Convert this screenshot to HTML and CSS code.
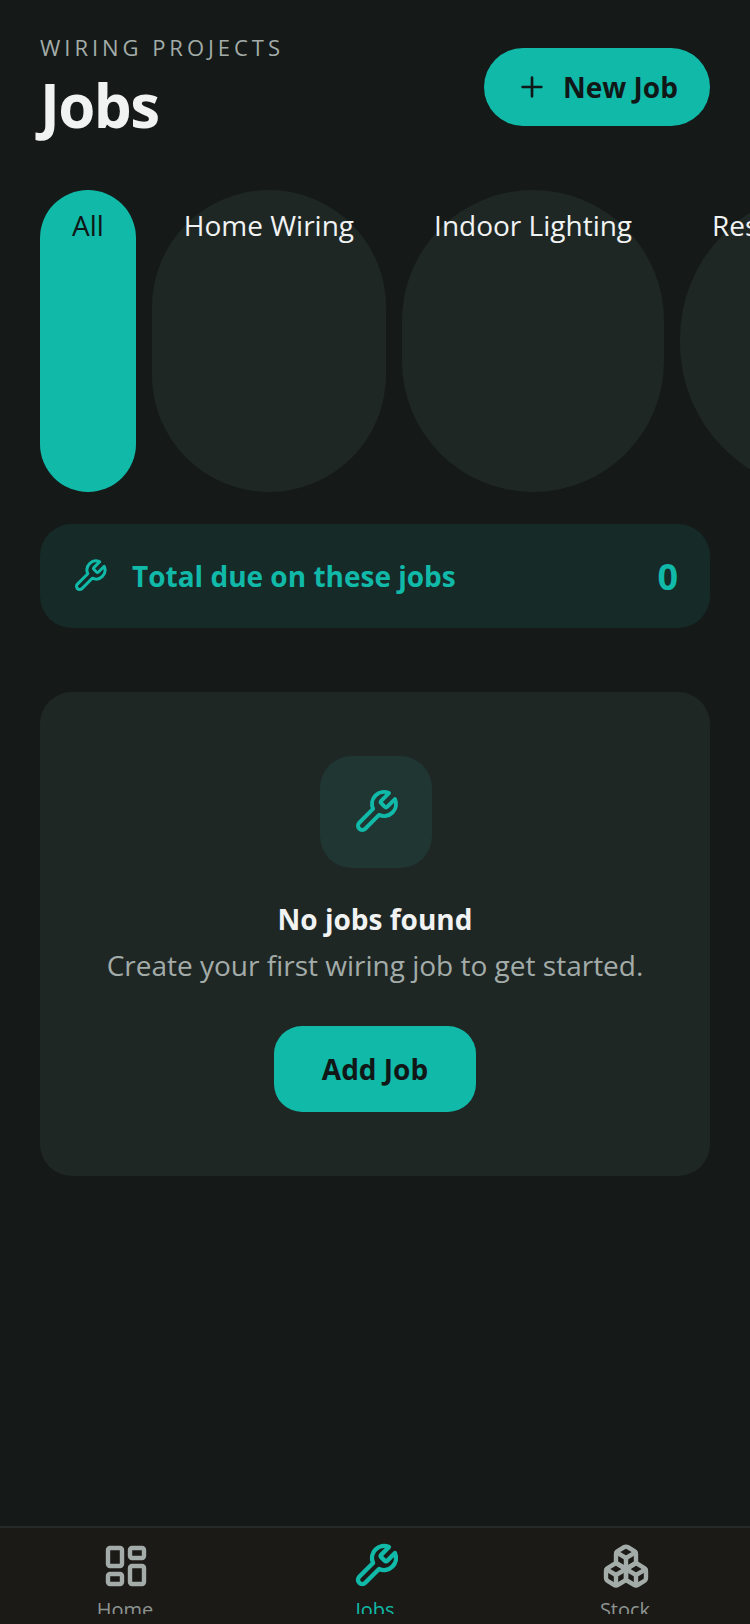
FILE: index.html
```html
<!DOCTYPE html>
<html lang="en">
<head>
<meta charset="utf-8">
<title>Jobs</title>
<link rel="stylesheet" href="styles.css">
</head>
<body>
<div class="app">
  <main class="main">
    <header class="header">
      <div class="titles">
        <div class="eyebrow">WIRING PROJECTS</div>
        <h1 class="title">Jobs</h1>
      </div>
      <button class="new-btn">
        <svg class="plus" viewBox="0 0 24 24"><path d="M5 12h14M12 5v14"/></svg>
        <span class="new-label">New Job</span>
      </button>
    </header>
    <div class="chips">
      <div class="chip chip-active">All</div>
      <div class="chip">Home Wiring</div>
      <div class="chip">Indoor Lighting</div>
      <div class="chip">Residential Wiring</div>
    </div>
    <section class="total">
      <svg class="ico total-ico" viewBox="0 0 24 24"><path d="M14.7 6.3a1 1 0 0 0 0 1.4l1.6 1.6a1 1 0 0 0 1.4 0l3.77-3.77a6 6 0 0 1-7.94 7.94l-6.91 6.91a2.12 2.12 0 0 1-3-3l6.91-6.91a6 6 0 0 1 7.94-7.94l-3.76 3.76z"/></svg>
      <span class="total-label">Total due on these jobs</span>
      <span class="total-value">0</span>
    </section>
    <section class="empty">
      <div class="empty-tile">
        <svg class="ico empty-ico" viewBox="0 0 24 24"><path d="M14.7 6.3a1 1 0 0 0 0 1.4l1.6 1.6a1 1 0 0 0 1.4 0l3.77-3.77a6 6 0 0 1-7.94 7.94l-6.91 6.91a2.12 2.12 0 0 1-3-3l6.91-6.91a6 6 0 0 1 7.94-7.94l-3.76 3.76z"/></svg>
      </div>
      <div class="empty-title">No jobs found</div>
      <div class="empty-text">Create your first wiring job to get started.</div>
      <button class="add-btn">Add Job</button>
    </section>
  </main>
  <nav class="nav">
    <div class="nav-item">
      <svg class="ico nav-ico" viewBox="0 0 24 24"><rect x="3" y="3" width="7" height="9" rx="1"/><rect x="14" y="3" width="7" height="5" rx="1"/><rect x="14" y="12" width="7" height="9" rx="1"/><rect x="3" y="16" width="7" height="5" rx="1"/></svg>
      <span class="nav-label">Home</span>
    </div>
    <div class="nav-item nav-active">
      <svg class="ico nav-ico" viewBox="0 0 24 24"><path d="M14.7 6.3a1 1 0 0 0 0 1.4l1.6 1.6a1 1 0 0 0 1.4 0l3.77-3.77a6 6 0 0 1-7.94 7.94l-6.91 6.91a2.12 2.12 0 0 1-3-3l6.91-6.91a6 6 0 0 1 7.94-7.94l-3.76 3.76z"/></svg>
      <span class="nav-label">Jobs</span>
    </div>
    <div class="nav-item">
      <svg class="ico nav-ico" viewBox="0 0 24 24"><path d="M2.97 12.92A2 2 0 0 0 2 14.63v3.24a2 2 0 0 0 .97 1.71l3 1.8a2 2 0 0 0 2.06 0L12 19v-5.5l-5-3-4.03 2.42Z"/><path d="m7 16.5-4.74-2.85"/><path d="m7 16.5 5-3"/><path d="M7 16.5v5.17"/><path d="M12 13.5V19l3.97 2.38a2 2 0 0 0 2.06 0l3-1.8a2 2 0 0 0 .97-1.71v-3.24a2 2 0 0 0-.97-1.71L17 10.5l-5 3Z"/><path d="m17 16.5-5-3"/><path d="m17 16.5 4.74-2.85"/><path d="M17 16.5v5.17"/><path d="M7.97 4.42A2 2 0 0 0 7 6.13v4.37l5 3 5-3V6.13a2 2 0 0 0-.97-1.71l-3-1.8a2 2 0 0 0-2.06 0l-3 1.8Z"/><path d="M12 8 7.26 5.15"/><path d="m12 8 4.74-2.85"/><path d="M12 13.5V8"/></svg>
      <span class="nav-label">Stock</span>
    </div>
  </nav>
</div>
</body>
</html>
```
FILE: styles.css
```css
* { box-sizing: border-box; }
html, body { margin: 0; padding: 0; }
body {
  background: #151a18;
  font-family: "Open Sans", sans-serif;
  color: #f1f3f3;
}
.app {
  width: 750px;
  height: 1624px;
  display: flex;
  flex-direction: column;
  overflow: hidden;
}
.main { flex: 1; min-height: 0; padding: 32px 40px 0; }
.ico {
  fill: none;
  stroke: currentColor;
  stroke-width: 2;
  stroke-linecap: round;
  stroke-linejoin: round;
  flex: none;
}
.header {
  display: flex;
  justify-content: space-between;
  align-items: flex-start;
  height: 126px;
}
.eyebrow {
  font-size: 22px;
  line-height: 30px;
  letter-spacing: 3.96px;
  color: #a3aca9;
}
.title {
  margin: 2px 0 0;
  font-size: 60px;
  line-height: 82px;
  font-weight: 700;
  letter-spacing: -1.6px;
  color: #f1f3f3;
}
.new-btn {
  display: flex;
  align-items: center;
  gap: 15px;
  width: 226px;
  height: 78px;
  padding: 0 32px;
  margin-top: 16px;
  border: 0;
  border-radius: 39px;
  background: #10b9a8;
  color: #101716;
  font-family: inherit;
  font-size: 28px;
  font-weight: 700;
}
.new-label { white-space: nowrap; }
.plus {
  width: 32px;
  height: 32px;
  fill: none;
  stroke: currentColor;
  stroke-width: 2;
  stroke-linecap: round;
  flex: none;
}
.chips {
  display: flex;
  gap: 16px;
  height: 302px;
  margin-top: 32px;
  margin-right: -40px;
  overflow: hidden;
}
.chip {
  flex: none;
  padding: 16px 32px;
  border-radius: 999px;
  background: #1f2725;
  font-size: 28px;
  line-height: 38px;
  color: #f1f3f3;
}
.chip-active { background: #10b9a8; color: #101716; }
.total {
  display: flex;
  align-items: center;
  height: 104px;
  margin-top: 32px;
  padding: 0 32px;
  border-radius: 32px;
  background: #162a28;
  color: #10b9a8;
}
.total-ico { width: 36px; height: 36px; margin-right: 24px; }
.total-label { flex: 1; font-size: 28px; font-weight: 700; }
.total-value { font-size: 36px; font-weight: 700; }
.empty {
  display: flex;
  flex-direction: column;
  align-items: center;
  height: 484px;
  margin-top: 64px;
  padding-top: 64px;
  border-radius: 32px;
  background: #1f2725;
}
.empty-tile {
  display: flex;
  align-items: center;
  justify-content: center;
  width: 112px;
  height: 112px;
  margin-left: 2px;
  border-radius: 32px;
  background: #203633;
  color: #10b9a8;
}
.empty-ico { width: 48px; height: 48px; }
.empty-title {
  margin-top: 30px;
  font-size: 28px;
  line-height: 42px;
  font-weight: 700;
}
.empty-text {
  margin-top: 4px;
  font-size: 28px;
  line-height: 42px;
  color: #a3aca9;
}
.add-btn {
  width: 202px;
  height: 86px;
  margin-top: 40px;
  border: 0;
  border-radius: 28px;
  background: #10b9a8;
  color: #101716;
  font-family: inherit;
  font-size: 28px;
  font-weight: 700;
}
.nav {
  display: flex;
  flex: none;
  height: 98px;
  padding: 14px 0 0;
  border-top: 2px solid #262b28;
  background: #1c1a17;
  justify-content: space-around;
}
.nav-item {
  width: 250px;
  height: 72px;
  display: flex;
  flex-direction: column;
  align-items: center;
  gap: 6px;
  overflow: hidden;
  color: #a3aca9;
}
.nav-ico { width: 48px; height: 48px; margin-left: 2px; stroke-width: 2.2; }
.nav-label { font-size: 20px; line-height: 28px; color: #8c9491; }
.nav-active, .nav-active .nav-label { color: #10b9a8; }
```
